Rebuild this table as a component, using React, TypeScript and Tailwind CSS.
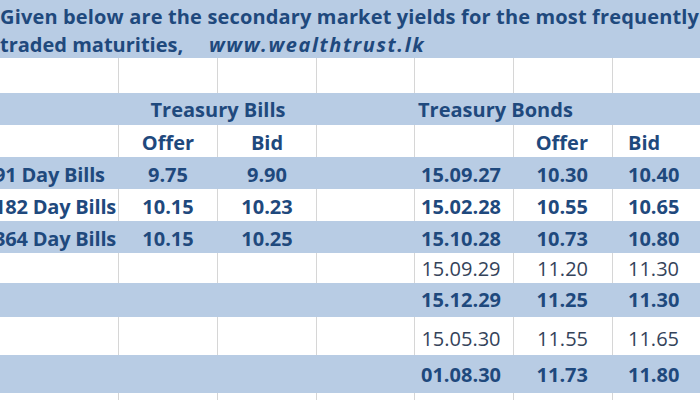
import React from 'react';

type Cell = { text?: string; align?: string; bold?: boolean };

interface RowSpec {
  blue: boolean;
  h: string;
  pt: string;
  cells: Cell[];
}

// column widths A..G, table is pulled 14px left so col A ends at x=119
const WIDTHS = ['w-[133px]', 'w-[99px]', 'w-[99px]', 'w-[98px]', 'w-[99px]', 'w-[99px]', 'w-[99px]'];

const A = 'text-left pl-[8px] tracking-[-0.2px]';
const C = 'text-center';
const E = 'text-center pr-[6px]';
const F = 'text-right pr-[24px]';
const G = 'text-left pl-[15px]';

const bond = (date: string, offer: string, bid: string, bold = true): Cell[] => [
  {},
  {},
  {},
  {},
  { text: date, align: E, bold },
  { text: offer, align: F, bold },
  { text: bid, align: G, bold },
];

const ROWS: RowSpec[] = [
  {
    blue: false,
    h: 'h-[32px]',
    pt: 'pt-[6px]',
    cells: [{}, { text: 'Offer', align: C, bold: true }, { text: 'Bid', align: C, bold: true }, {}, {}, { text: 'Offer', align: F, bold: true }, { text: 'Bid', align: G, bold: true }],
  },
  {
    blue: true,
    h: 'h-[32px]',
    pt: 'pt-[6px]',
    cells: [
      { text: '91 Day Bills', align: A, bold: true },
      { text: '9.75', align: C, bold: true },
      { text: '9.90', align: C, bold: true },
      {},
      { text: '15.09.27', align: E, bold: true },
      { text: '10.30', align: F, bold: true },
      { text: '10.40', align: G, bold: true },
    ],
  },
  {
    blue: false,
    h: 'h-[32px]',
    pt: 'pt-[6px]',
    cells: [
      { text: '182 Day Bills', align: A, bold: true },
      { text: '10.15', align: C, bold: true },
      { text: '10.23', align: C, bold: true },
      {},
      { text: '15.02.28', align: E, bold: true },
      { text: '10.55', align: F, bold: true },
      { text: '10.65', align: G, bold: true },
    ],
  },
  {
    blue: true,
    h: 'h-[32px]',
    pt: 'pt-[6px]',
    cells: [
      { text: '364 Day Bills', align: A, bold: true },
      { text: '10.15', align: C, bold: true },
      { text: '10.25', align: C, bold: true },
      {},
      { text: '15.10.28', align: E, bold: true },
      { text: '10.73', align: F, bold: true },
      { text: '10.80', align: G, bold: true },
    ],
  },
  { blue: false, h: 'h-[30px]', pt: 'pt-[4px]', cells: bond('15.09.29', '11.20', '11.30', false) },
  { blue: true, h: 'h-[34px]', pt: 'pt-[5px]', cells: bond('15.12.29', '11.25', '11.30') },
  { blue: false, h: 'h-[38px]', pt: 'pt-[10px]', cells: bond('15.05.30', '11.55', '11.65', false) },
  { blue: true, h: 'h-[38px]', pt: 'pt-[8px]', cells: bond('01.08.30', '11.73', '11.80') },
  { blue: false, h: 'h-[32px]', pt: 'pt-[6px]', cells: bond('', '', '', false) },
];

function Row({ row }: { row: RowSpec }) {
  return (
    <div className={`flex ${row.h} ${row.blue ? 'bg-[#b8cce4]' : 'bg-white'}`}>
      {row.cells.map((cell, i) => (
        <div
          key={i}
          className={`${WIDTHS[i]} shrink-0 whitespace-nowrap border-r ${
            row.blue ? 'border-transparent' : 'border-[#d6d6d6]'
          } ${row.pt} ${cell.align ?? ''} ${
            cell.bold ? 'font-bold text-[#1f497d]' : 'font-normal text-[#34435a]'
          }`}
        >
          {cell.text}
        </div>
      ))}
    </div>
  );
}

export default function App() {
  return (
    <div className="h-[400px] w-[700px] overflow-hidden bg-white font-['Open_Sans',sans-serif] text-[20px] leading-6">
      <div className="h-[58px] bg-[#b8cce4] pt-[3px] font-bold leading-[28px] text-[#1f497d] whitespace-nowrap">
        <div className="tracking-[0.15px]">Given below are the secondary market yields for the most frequently</div>
        <div className="flex">
          <span className="inline-block w-[209px]">traded maturities,</span>
          <span className="italic tracking-[1.6px]">www.wealthtrust.lk</span>
        </div>
      </div>

      <div className="-ml-[14px]">
        <div className="flex h-[35px] bg-white">
          {WIDTHS.map((w, i) => (
            <div key={i} className={`${w} shrink-0 border-r border-[#d6d6d6]`} />
          ))}
        </div>

        <div className="flex h-[32px] bg-[#b8cce4] pt-[5px] font-bold text-[#1f497d] whitespace-nowrap">
          <div className="w-[133px] shrink-0" />
          <div className="w-[198px] shrink-0 text-center">Treasury Bills</div>
          <div className="w-[98px] shrink-0" />
          <div className="w-[198px] shrink-0 pl-[3px] text-left">Treasury Bonds</div>
          <div className="w-[99px] shrink-0" />
        </div>

        {ROWS.map((row, i) => (
          <Row key={i} row={row} />
        ))}
      </div>
    </div>
  );
}
